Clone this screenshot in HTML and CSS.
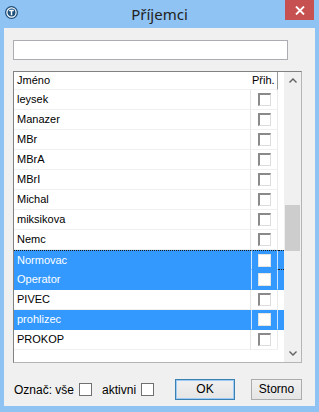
FILE: index.html
```html
<!DOCTYPE html>
<html lang="cs">
<head>
    <meta charset="UTF-8">
    <meta name="viewport" content="width=device-width, initial-scale=1.0">
    <title>Příjemci</title>
    <link rel="stylesheet" href="styles.css">
</head>
<body>
    <div class="window">
        <div class="titlebar">
            <svg class="app-icon" width="13" height="13" viewBox="0 0 13 13">
                <circle cx="6.5" cy="6.5" r="6.5" fill="#1d4f7c"/>
                <circle cx="6.5" cy="6.5" r="4.6" fill="none" stroke="#ffffff" stroke-width="1.2"/>
                <path d="M4.2 4.4 H8.8 M6.5 4.4 V9.2" stroke="#ffffff" stroke-width="1.5" fill="none"/>
            </svg>
            <div class="title">Příjemci</div>
            <div class="close">
                <svg width="10" height="9" viewBox="0 0 10 9">
                    <path d="M1 0.5 L9 8.5 M9 0.5 L1 8.5" stroke="#ffffff" stroke-width="1.8"/>
                </svg>
            </div>
        </div>

        <div class="content">
            <div class="search"></div>

            <div class="listbox">
                <div class="list">
                    <div class="row header">
                        <div class="name">Jméno</div>
                        <div class="check">Přih.</div>
                        <div class="extra"></div>
                    </div>
                    <div class="row"><div class="name">leysek</div><div class="check"><span class="box"></span></div><div class="extra"></div></div>
                    <div class="row"><div class="name">Manazer</div><div class="check"><span class="box"></span></div><div class="extra"></div></div>
                    <div class="row"><div class="name">MBr</div><div class="check"><span class="box"></span></div><div class="extra"></div></div>
                    <div class="row"><div class="name">MBrA</div><div class="check"><span class="box"></span></div><div class="extra"></div></div>
                    <div class="row"><div class="name">MBrI</div><div class="check"><span class="box"></span></div><div class="extra"></div></div>
                    <div class="row"><div class="name">Michal</div><div class="check"><span class="box"></span></div><div class="extra"></div></div>
                    <div class="row"><div class="name">miksikova</div><div class="check"><span class="box"></span></div><div class="extra"></div></div>
                    <div class="row"><div class="name">Nemc</div><div class="check"><span class="box"></span></div><div class="extra"></div></div>
                    <div class="row selected focused"><div class="name">Normovac</div><div class="check"><span class="box"></span></div><div class="extra"></div></div>
                    <div class="row selected"><div class="name">Operator</div><div class="check"><span class="box"></span></div><div class="extra"></div></div>
                    <div class="row"><div class="name">PIVEC</div><div class="check"><span class="box"></span></div><div class="extra"></div></div>
                    <div class="row selected"><div class="name">prohlizec</div><div class="check"><span class="box"></span></div><div class="extra"></div></div>
                    <div class="row"><div class="name">PROKOP</div><div class="check"><span class="box"></span></div><div class="extra"></div></div>
                </div>
                <div class="scrollbar">
                    <div class="arrow">
                        <svg width="8" height="5" viewBox="0 0 8 5"><path d="M0.5 4.5 L4 1 L7.5 4.5" stroke="#606060" stroke-width="1.4" fill="none"/></svg>
                    </div>
                    <div class="track"><div class="thumb"></div></div>
                    <div class="arrow">
                        <svg width="8" height="5" viewBox="0 0 8 5"><path d="M0.5 0.5 L4 4 L7.5 0.5" stroke="#606060" stroke-width="1.4" fill="none"/></svg>
                    </div>
                </div>
            </div>

            <div class="footer">
                <span class="label">Označ: vše</span>
                <span class="plain-box"></span>
                <span class="label second">aktivni</span>
                <span class="plain-box"></span>
                <div class="buttons">
                    <div class="btn default">OK</div>
                    <div class="btn storno">Storno</div>
                </div>
            </div>
        </div>
    </div>
</body>
</html>
```

FILE: styles.css
```css
body {
    margin: 0;
    font-family: "Liberation Sans", Arial, sans-serif;
    font-size: 11px;
    color: #000000;
}

.window {
    width: 319px;
    height: 412px;
    background-color: #8fc3f3;
    display: flex;
    flex-direction: column;
    box-sizing: border-box;
}

.titlebar {
    height: 28px;
    display: grid;
    grid-template-columns: 1fr auto 1fr;
    flex-shrink: 0;
}

.app-icon {
    margin: 6px 0 0 5px;
}

.title {
    font-family: "Noto Sans", "Open Sans", sans-serif;
    font-size: 15px;
    color: #222222;
    line-height: 28px;
}

.close {
    justify-self: end;
    width: 29px;
    height: 20px;
    margin-right: 5px;
    background-color: #c75050;
    display: flex;
    align-items: center;
    justify-content: center;
}

.content {
    flex: 1;
    margin: 0 4px 6px 4px;
    background-color: #f0f0f0;
    padding: 12px 13px 0 9px;
    display: flex;
    flex-direction: column;
}

.search {
    width: 275px;
    height: 20px;
    box-sizing: border-box;
    background-color: #ffffff;
    border: 1px solid #abadb3;
}

.listbox {
    margin-top: 11px;
    height: 292px;
    box-sizing: border-box;
    border: 1px solid #b5b5b5;
    border-top-color: #828282;
    border-left-color: #828282;
    background-color: #ffffff;
    display: flex;
}

.list {
    width: 270px;
}

.row {
    display: grid;
    grid-template-columns: 237px 27px 6px;
    height: 20px;
    line-height: 19px;
}

.row .name {
    padding-left: 3px;
    border-right: 1px solid #e6e6e6;
    border-bottom: 1px solid #f0f0f0;
}

.row .check {
    border-right: 1px solid #ebebeb;
    border-bottom: 1px solid #f0f0f0;
    display: flex;
    align-items: center;
    justify-content: center;
}

.row.header {
    height: 18px;
    line-height: 17px;
}

.row.header .name {
    border-right: none;
}

.row.header .check {
    display: block;
    padding-left: 1px;
    border-right: 1px solid #9a9a9a;
    border-bottom: 1px solid #f0f0f0;
}

.box {
    width: 13px;
    height: 13px;
    box-sizing: border-box;
    background-color: #ffffff;
    border: 1px solid #dcdcdc;
    border-top: 2px solid #8a8a8a;
    border-left: 2px solid #8a8a8a;
}

.row.selected {
    background-color: #3399ff;
    color: #ffffff;
}

.row.selected .name,
.row.selected .check {
    border-bottom-color: #3399ff;
}

.row.selected .check {
    border-left: 1px solid #cfe6ff;
    border-right-color: #cfe6ff;
}

.row.selected .name {
    border-right: none;
}

.row.selected .box {
    border: 1px solid #e4e4e4;
}

.row.focused > div {
    border-top: 1px dotted #1a1a1a;
    border-bottom: 1px dotted #1a1a1a;
    line-height: 18px;
}

.scrollbar {
    width: 17px;
    background-color: #f0f0f0;
    display: flex;
    flex-direction: column;
}

.arrow {
    height: 17px;
    display: flex;
    align-items: center;
    justify-content: center;
}

.track {
    flex: 1;
}

.thumb {
    width: 15px;
    height: 46px;
    margin: 116px 0 0 1px;
    background-color: #cdcdcd;
}

.footer {
    margin-top: 16px;
    display: flex;
    align-items: center;
    font-size: 12px;
}

.footer .label {
    margin-left: 1px;
}

.footer .second {
    margin-left: 10px;
}

.plain-box {
    width: 13px;
    height: 13px;
    box-sizing: border-box;
    margin-left: 5px;
    background-color: #ffffff;
    border: 1px solid #707070;
}

.buttons {
    margin-left: auto;
    display: flex;
    gap: 16px;
}

.btn {
    height: 21px;
    box-sizing: border-box;
    border: 1px solid #acacac;
    background: linear-gradient(#f0f0f0, #e5e5e5);
    text-align: center;
    line-height: 19px;
    font-size: 12px;
}

.btn.default {
    width: 60px;
    border-color: #3c7fb1;
    box-shadow: inset 0 0 0 1px #9ccbf5;
}

.btn.storno {
    width: 51px;
}
```
